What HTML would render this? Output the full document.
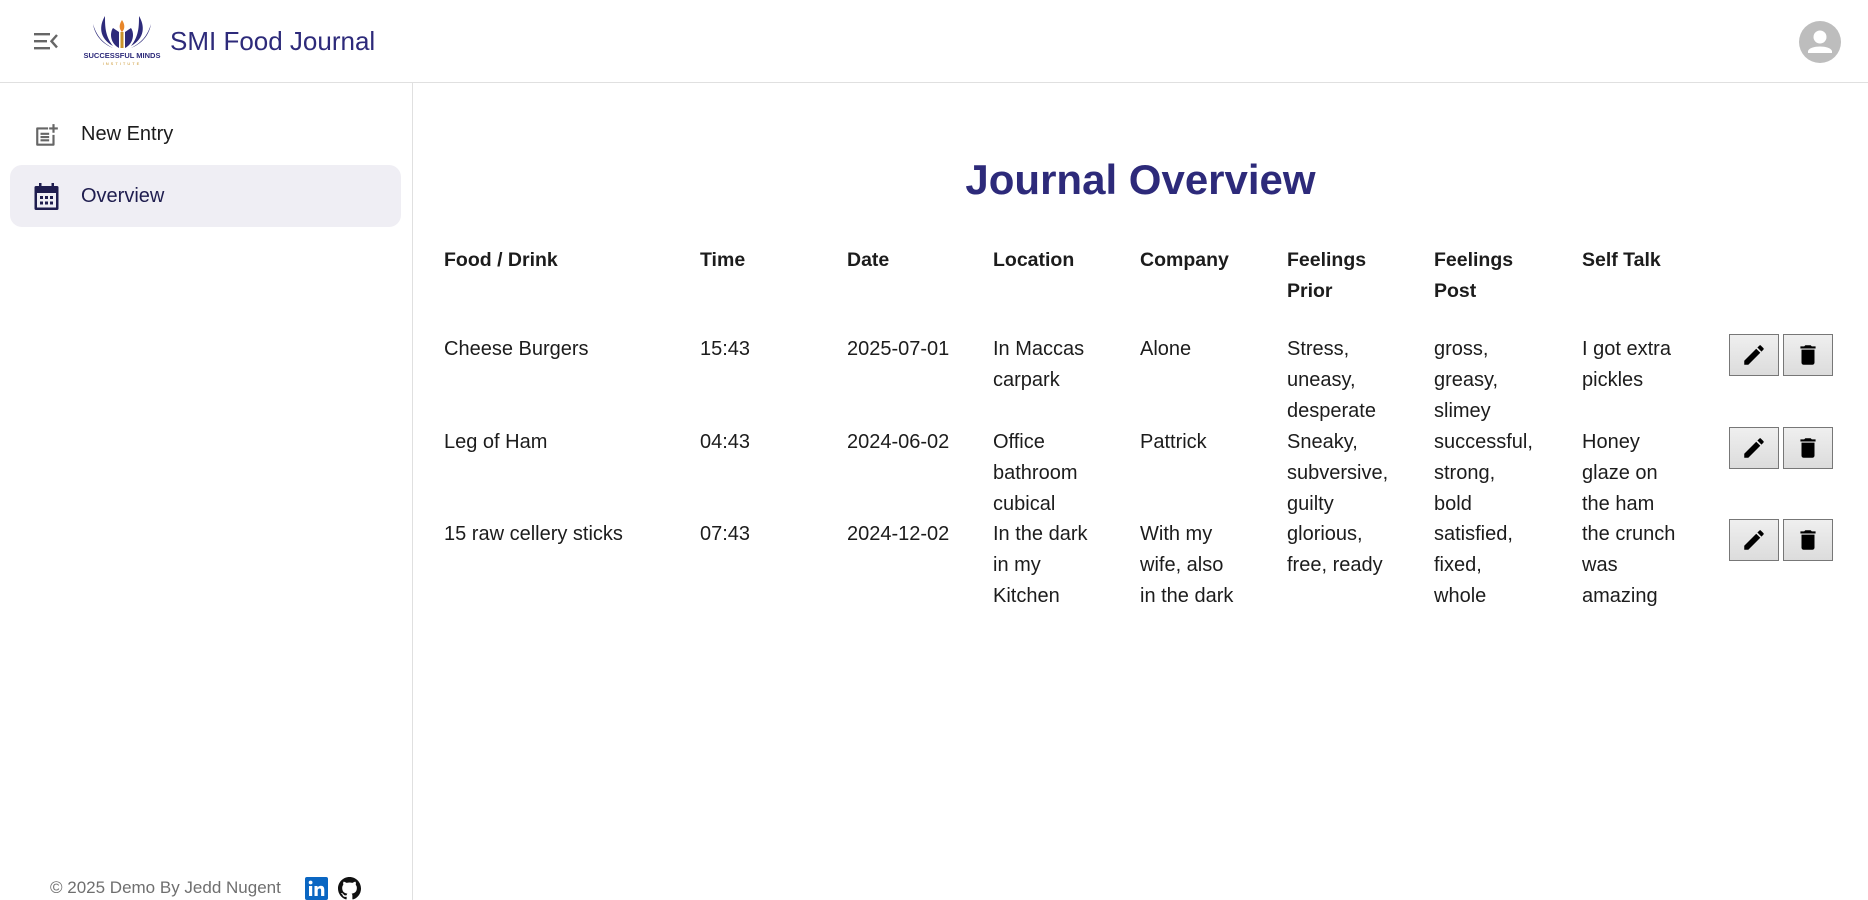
<!DOCTYPE html>
<html><head><meta charset="utf-8"><style>
*{margin:0;padding:0;box-sizing:border-box}
body{width:1868px;height:900px;overflow:hidden;background:#fff;font-family:"Liberation Sans",Arial,sans-serif;color:#1c1c1c;position:relative}
.a{position:absolute}
.hdr{left:0;top:0;width:1868px;height:83px;border-bottom:1px solid #e0e0e0}
.side{left:0;top:83px;width:413px;height:817px;border-right:1px solid #e0e0e0}
.c{position:absolute;font-size:20px;line-height:31px;white-space:nowrap}
.h{font-weight:bold;font-size:19.5px}
.btn{position:absolute;width:50px;height:42px;border:1px solid #777;background:linear-gradient(#efefef,#dcdcdc);display:flex;align-items:center;justify-content:center}
</style></head><body>
<div class="a hdr"></div>
<div class="a side"></div>
<svg class="a" style="left:33px;top:30px" width="26" height="22" viewBox="0 0 26 22"><g fill="#666"><rect x="1" y="3" width="16" height="2.4"/><rect x="1" y="10" width="13" height="2.4"/><rect x="1" y="17" width="16" height="2.4"/><path d="M24 5 L18.5 11.2 L24 17.4" stroke="#666" stroke-width="2.4" fill="none"/></g></svg>
<svg class="a" style="left:83px;top:14px" width="78" height="52" viewBox="0 0 78 52"><g fill="#2d2a7a"><path d="M22 2 C16 12 16 24 30 32 C22 22 22 12 22 2Z"/><path d="M56 2 C62 12 62 24 48 32 C56 22 56 12 56 2Z"/><path d="M10 10 C12 22 20 30 30 34 C18 28 13 20 10 10Z"/><path d="M68 10 C66 22 58 30 48 34 C60 28 65 20 68 10Z"/><path d="M30 14 C26 20 28 30 36 34 L36 18Z"/><path d="M48 14 C52 20 50 30 42 34 L42 18Z"/></g><path d="M39 6 C35 12 37 16 39 18 C41 16 43 12 39 6Z" fill="#e8862a"/><rect x="37.5" y="18" width="3" height="16" fill="#c9932a"/><text x="39" y="44" font-size="7.5" font-weight="bold" text-anchor="middle" fill="#2d2a7a" font-family="Liberation Sans">SUCCESSFUL MINDS</text><text x="39" y="51" font-size="4" text-anchor="middle" fill="#c9932a" letter-spacing="2" font-family="Liberation Sans">INSTITUTE</text></svg>
<div class="a" style="left:170px;top:24px;font-size:26px;color:#2d2a7a;line-height:34px">SMI Food Journal</div>
<svg class="a" style="left:1799px;top:21px" width="42" height="42" viewBox="0 0 42 42"><circle cx="21" cy="21" r="21" fill="#bdbdbd"/><circle cx="21" cy="16" r="6.5" fill="#fff"/><path d="M9 30 C11 24 31 24 33 30 L33 32 L9 32Z" fill="#fff"/></svg>
<svg class="a" style="left:34px;top:123px" width="26" height="26" viewBox="0 0 24 24"><path fill="#666" d="M13 4H3a1 1 0 0 0-1 1v15a1 1 0 0 0 1 1h15a1 1 0 0 0 1-1V11h-2v8H4V6h9z M6 9h8v2H6z M6 12h8v2H6z M6 15h8v2H6z M17 1h2v3h3v2h-3v3h-2V6h-3V4h3z"/></svg>
<div class="a" style="left:81px;top:120px;font-size:20px;line-height:28px;color:#1c1c1c">New Entry</div>
<div class="a" style="left:10px;top:165px;width:391px;height:62px;background:#efeef4;border-radius:12px"></div>
<svg class="a" style="left:34px;top:183px" width="25" height="27" viewBox="0 0 25 27"><g fill="#1f1d4f"><rect x="5" y="0" width="2.5" height="5"/><rect x="17.5" y="0" width="2.5" height="5"/><path d="M2 3h21a1.5 1.5 0 0 1 1.5 1.5v21a1.5 1.5 0 0 1-1.5 1.5H2A1.5 1.5 0 0 1 .5 25.5v-21A1.5 1.5 0 0 1 2 3zM3 10v14.5h19V10z"/><rect x="6" y="13" width="3" height="3"/><rect x="11" y="13" width="3" height="3"/><rect x="16" y="13" width="3" height="3"/><rect x="6" y="18.5" width="3" height="3"/><rect x="11" y="18.5" width="3" height="3"/><rect x="16" y="18.5" width="3" height="3"/></g></svg>
<div class="a" style="left:81px;top:182px;font-size:20px;line-height:28px;color:#1f1d4f">Overview</div>
<div class="a" style="left:50px;top:876px;font-size:17px;line-height:24px;color:#6f6f6f">© 2025 Demo By Jedd Nugent</div>
<svg class="a" style="left:305px;top:877px" width="23" height="23" viewBox="0 0 23 23"><rect width="23" height="23" rx="2" fill="#0a66c2"/><rect x="4" y="9" width="3.2" height="10" fill="#fff"/><circle cx="5.6" cy="5.5" r="1.9" fill="#fff"/><path d="M9.5 9h3v1.5c.8-1.2 2-1.8 3.4-1.8 2.4 0 3.4 1.5 3.4 4.2V19h-3.2v-5.5c0-1.3-.4-2-1.5-2s-1.9.8-1.9 2.1V19H9.5z" fill="#fff"/></svg>
<svg class="a" style="left:338px;top:877px" width="23" height="23" viewBox="0 0 16 16"><path fill="#111" d="M8 0C3.58 0 0 3.58 0 8c0 3.54 2.29 6.53 5.47 7.59.4.07.55-.17.55-.38 0-.19-.01-.82-.01-1.49-2.01.37-2.53-.49-2.69-.94-.09-.23-.48-.94-.82-1.13-.28-.15-.68-.52-.01-.53.63-.01 1.08.58 1.23.82.72 1.21 1.87.87 2.33.66.07-.52.28-.87.51-1.07-1.78-.2-3.64-.89-3.64-3.95 0-.87.31-1.59.82-2.15-.08-.2-.36-1.02.08-2.12 0 0 .67-.21 2.2.82.64-.18 1.32-.27 2-.27.68 0 1.36.09 2 .27 1.53-1.04 2.2-.82 2.2-.82.44 1.1.16 1.92.08 2.12.51.56.82 1.27.82 2.15 0 3.07-1.87 3.75-3.65 3.95.29.25.54.73.54 1.48 0 1.07-.01 1.93-.01 2.2 0 .21.15.46.55.38A8.013 8.013 0 0016 8c0-4.42-3.58-8-8-8z"/></svg>
<div class="a" style="left:413px;width:1455px;top:154px;text-align:center;font-size:42px;font-weight:bold;color:#2d2a7a;line-height:52px">Journal Overview</div>

<div class="c h" style="left:444px;top:245px">Food / Drink</div>
<div class="c h" style="left:700px;top:245px">Time</div>
<div class="c h" style="left:847px;top:245px">Date</div>
<div class="c h" style="left:993px;top:245px">Location</div>
<div class="c h" style="left:1140px;top:245px">Company</div>
<div class="c h" style="left:1287px;top:245px">Feelings<br>Prior</div>
<div class="c h" style="left:1434px;top:245px">Feelings<br>Post</div>
<div class="c h" style="left:1582px;top:245px">Self Talk</div>

<div class="c" style="left:444px;top:334px">Cheese Burgers</div>
<div class="c" style="left:700px;top:334px">15:43</div>
<div class="c" style="left:847px;top:334px">2025-07-01</div>
<div class="c" style="left:993px;top:334px">In Maccas<br>carpark</div>
<div class="c" style="left:1140px;top:334px">Alone</div>
<div class="c" style="left:1287px;top:334px">Stress,<br>uneasy,<br>desperate</div>
<div class="c" style="left:1434px;top:334px">gross,<br>greasy,<br>slimey</div>
<div class="c" style="left:1582px;top:334px">I got extra<br>pickles</div>

<div class="c" style="left:444px;top:427px">Leg of Ham</div>
<div class="c" style="left:700px;top:427px">04:43</div>
<div class="c" style="left:847px;top:427px">2024-06-02</div>
<div class="c" style="left:993px;top:427px">Office<br>bathroom<br>cubical</div>
<div class="c" style="left:1140px;top:427px">Pattrick</div>
<div class="c" style="left:1287px;top:427px">Sneaky,<br>subversive,<br>guilty</div>
<div class="c" style="left:1434px;top:427px">successful,<br>strong,<br>bold</div>
<div class="c" style="left:1582px;top:427px">Honey<br>glaze on<br>the ham</div>

<div class="c" style="left:444px;top:519px">15 raw cellery sticks</div>
<div class="c" style="left:700px;top:519px">07:43</div>
<div class="c" style="left:847px;top:519px">2024-12-02</div>
<div class="c" style="left:993px;top:519px">In the dark<br>in my<br>Kitchen</div>
<div class="c" style="left:1140px;top:519px">With my<br>wife, also<br>in the dark</div>
<div class="c" style="left:1287px;top:519px">glorious,<br>free, ready</div>
<div class="c" style="left:1434px;top:519px">satisfied,<br>fixed,<br>whole</div>
<div class="c" style="left:1582px;top:519px">the crunch<br>was<br>amazing</div>

<div class="btn" style="left:1729px;top:334px"><svg width="26" height="26" viewBox="0 0 24 24"><path d="M3 17.25V21h3.75L17.81 9.94l-3.75-3.75zM20.71 7.04a1 1 0 0 0 0-1.41l-2.34-2.34a1 1 0 0 0-1.41 0l-1.83 1.83 3.75 3.75z"/></svg></div>
<div class="btn" style="left:1783px;top:334px"><svg width="26" height="26" viewBox="0 0 24 24"><path d="M6 19c0 1.1.9 2 2 2h8c1.1 0 2-.9 2-2V7H6zM19 4h-3.5l-1-1h-5l-1 1H5v2h14z"/></svg></div>
<div class="btn" style="left:1729px;top:427px"><svg width="26" height="26" viewBox="0 0 24 24"><path d="M3 17.25V21h3.75L17.81 9.94l-3.75-3.75zM20.71 7.04a1 1 0 0 0 0-1.41l-2.34-2.34a1 1 0 0 0-1.41 0l-1.83 1.83 3.75 3.75z"/></svg></div>
<div class="btn" style="left:1783px;top:427px"><svg width="26" height="26" viewBox="0 0 24 24"><path d="M6 19c0 1.1.9 2 2 2h8c1.1 0 2-.9 2-2V7H6zM19 4h-3.5l-1-1h-5l-1 1H5v2h14z"/></svg></div>
<div class="btn" style="left:1729px;top:519px"><svg width="26" height="26" viewBox="0 0 24 24"><path d="M3 17.25V21h3.75L17.81 9.94l-3.75-3.75zM20.71 7.04a1 1 0 0 0 0-1.41l-2.34-2.34a1 1 0 0 0-1.41 0l-1.83 1.83 3.75 3.75z"/></svg></div>
<div class="btn" style="left:1783px;top:519px"><svg width="26" height="26" viewBox="0 0 24 24"><path d="M6 19c0 1.1.9 2 2 2h8c1.1 0 2-.9 2-2V7H6zM19 4h-3.5l-1-1h-5l-1 1H5v2h14z"/></svg></div>
</body></html>
